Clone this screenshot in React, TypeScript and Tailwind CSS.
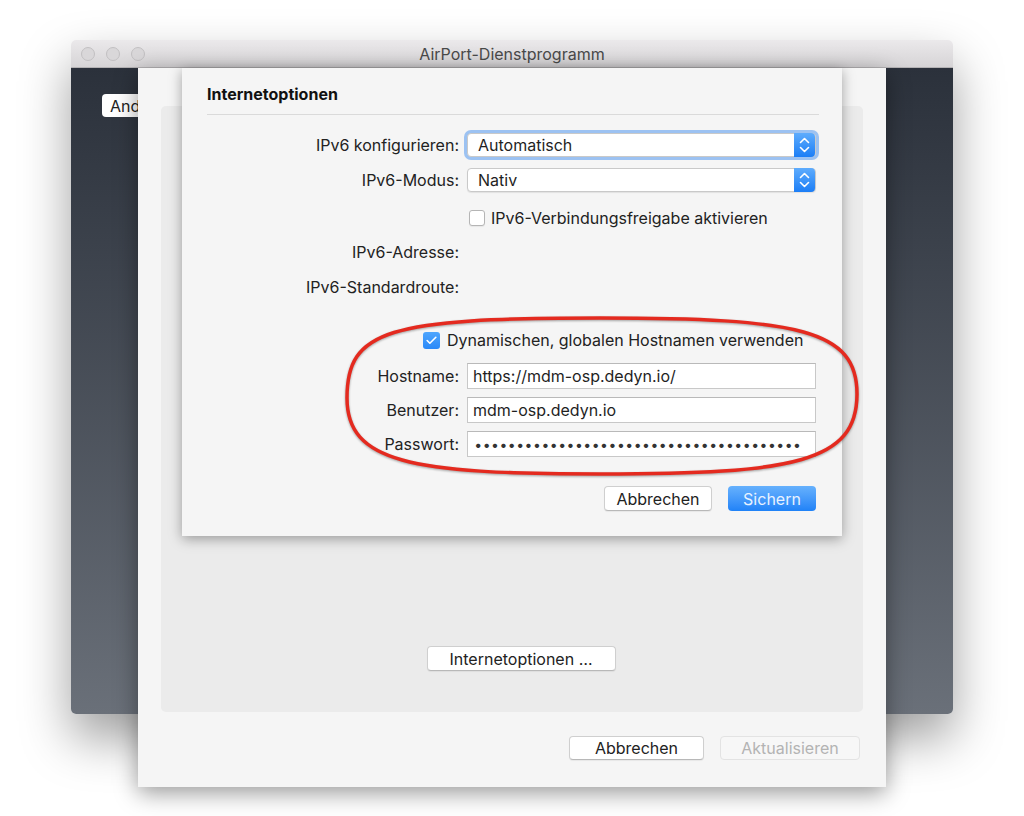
import { Check } from "lucide-react";

function Stepper() {
  return (
    <svg width="21" height="24" viewBox="0 0 21 24" aria-hidden="true" className="shrink-0">
      <defs>
        <linearGradient id="stepBlue" x1="0" y1="0" x2="0" y2="1">
          <stop offset="0" stopColor="#5eacfd" />
          <stop offset="1" stopColor="#1c7ef6" />
        </linearGradient>
      </defs>
      <path d="M0 0H17a4 4 0 0 1 4 4V20a4 4 0 0 1-4 4H0Z" fill="url(#stepBlue)" />
      <path d="M6.5 9.5L10.5 5.5L14.5 9.5" fill="none" stroke="#fff" strokeWidth="1.6" strokeLinecap="round" strokeLinejoin="round" />
      <path d="M6.5 14.5L10.5 18.5L14.5 14.5" fill="none" stroke="#fff" strokeWidth="1.6" strokeLinecap="round" strokeLinejoin="round" />
    </svg>
  );
}

function Popup({ value, focused }: { value: string; focused?: boolean }) {
  return (
    <div
      className={
        "flex h-[24px] w-[349px] items-center rounded-[4px] border border-[#c9c9c9] bg-white " +
        (focused ? "shadow-[0_0_0_3px_rgba(96,160,240,0.6)]" : "shadow-[0_1px_1px_rgba(0,0,0,0.08)]")
      }
    >
      <span className="flex-1 pl-[10px] text-[#1f1f1f]">{value}</span>
      <Stepper />
    </div>
  );
}

function Field({ children }: { children: React.ReactNode }) {
  return (
    <div className="flex h-[26px] w-[349px] items-center border border-[#c8c8c8] border-t-[#b9b9b9] bg-white pl-[5px] text-[#1f1f1f]">
      {children}
    </div>
  );
}

function Row({ label, className, children }: { label?: string; className: string; children?: React.ReactNode }) {
  return (
    <div className={"flex items-center " + className}>
      <div className="w-[252px] text-right text-[#222]">{label}</div>
      <div className="ml-[8px] flex items-center">{children}</div>
    </div>
  );
}

function MacButton({ children, className }: { children: React.ReactNode; className: string }) {
  return (
    <div
      className={
        "flex items-center justify-center rounded-[4px] border border-[#cfcfcf] border-b-[#b8b8b8] bg-white text-[#222] shadow-[0_1px_1px_rgba(0,0,0,0.06)] " +
        className
      }
    >
      {children}
    </div>
  );
}

function OptionsSheet() {
  return (
    <div className="absolute left-[111px] top-[28px] h-[468px] w-[660px] bg-[#f5f5f5] px-[25px] pt-[16px] shadow-[0_3px_12px_rgba(0,0,0,0.35)]">
      <div className="h-[20px] leading-[20px] font-bold text-[#111]">Internetoptionen</div>
      <div className="mt-[10px] h-px w-[612px] bg-[#dadada]" />

      <Row label="IPv6 konfigurieren:" className="mt-[18px] h-[24px]">
        <Popup value="Automatisch" focused />
      </Row>
      <Row label="IPv6-Modus:" className="mt-[11px] h-[24px]">
        <Popup value="Nativ" />
      </Row>
      <Row className="mt-[14px] h-[24px]">
        <div className="ml-[2px] h-[16px] w-[16px] rounded-[3px] border border-[#b5b5b5] bg-white shadow-[0_1px_1px_rgba(0,0,0,0.06)]" />
        <span className="ml-[6px] text-[#222]">IPv6-Verbindungsfreigabe aktivieren</span>
      </Row>
      <Row label="IPv6-Adresse:" className="mt-[10px] h-[24px]" />
      <Row label="IPv6-Standardroute:" className="mt-[11px] h-[24px]" />

      <div className="mt-[29px] flex h-[24px] items-center pl-[216px]">
        <div className="flex h-[17px] w-[17px] items-center justify-center rounded-[3px] bg-gradient-to-b from-[#4ea5fd] to-[#2a89f8]">
          <Check size={13} strokeWidth={3} color="#fff" />
        </div>
        <span className="ml-[7px] text-[#222]">Dynamischen, globalen Hostnamen verwenden</span>
      </div>

      <Row label="Hostname:" className="mt-[11px] h-[26px]">
        <Field>https://mdm-osp.dedyn.io/</Field>
      </Row>
      <Row label="Benutzer:" className="mt-[8px] h-[26px]">
        <Field>mdm-osp.dedyn.io</Field>
      </Row>
      <Row label="Passwort:" className="mt-[8px] h-[26px]">
        <Field>
          <div className="flex pl-[1px] text-[14px] text-[#333]">
            {Array.from({ length: 39 }).map((_, i) => (
              <span key={i} className="w-[8.4px] text-center">
                •
              </span>
            ))}
          </div>
        </Field>
      </Row>

      <div className="mt-[29px] flex h-[25px] w-[609px] justify-end gap-[16px]">
        <MacButton className="w-[108px]">Abbrechen</MacButton>
        <div className="flex w-[88px] items-center justify-center rounded-[4px] bg-gradient-to-b from-[#66b1fd] to-[#1f82f7] text-[#e8f2ff]">
          Sichern
        </div>
      </div>
    </div>
  );
}

function MainSheet() {
  return (
    <div className="absolute left-[67px] top-[28px] flex h-[719px] w-[748px] flex-col bg-[#f5f5f5] shadow-[0_6px_22px_rgba(0,0,0,0.4)]">
      <div className="mx-[23px] mt-[38px] flex h-[606px] flex-col items-center justify-end rounded-[5px] bg-[#ebebeb] pb-[41px]">
        <MacButton className="ml-[18px] h-[25px] w-[189px]">Internetoptionen …</MacButton>
      </div>
      <div className="mt-[24px] flex justify-end gap-[16px] pr-[26px]">
        <MacButton className="h-[24px] w-[135px]">Abbrechen</MacButton>
        <div className="flex h-[24px] w-[140px] items-center justify-center rounded-[4px] border border-[#e3e3e3] bg-[#f7f7f7] text-[#b3b3b3]">
          Aktualisieren
        </div>
      </div>
    </div>
  );
}

export default function App() {
  return (
    <div className="relative h-[816px] w-[1024px] overflow-hidden bg-white font-[Inter,'Liberation_Sans',sans-serif] text-[16px]">
      <div className="relative ml-[71px] mt-[40px] h-[674px] w-[882px] rounded-[5px] shadow-[0_24px_50px_rgba(0,0,0,0.38)]">
        <div className="relative flex h-[28px] items-center rounded-t-[5px] border-b border-[#b4b2b4] bg-gradient-to-b from-[#ebe9eb] to-[#d6d4d6]">
          <div className="ml-[10px] flex gap-[11px]">
            <span className="h-[14px] w-[14px] rounded-full border border-[#c2c0c2] bg-[#d9d7d9]" />
            <span className="h-[14px] w-[14px] rounded-full border border-[#c2c0c2] bg-[#d9d7d9]" />
            <span className="h-[14px] w-[14px] rounded-full border border-[#c2c0c2] bg-[#d9d7d9]" />
          </div>
          <div className="absolute inset-x-0 text-center text-[#4a4a4a]">AirPort-Dienstprogramm</div>
        </div>
        <div className="h-[646px] rounded-b-[5px] bg-gradient-to-b from-[#2b313b] to-[#6a7079] pl-[31px] pt-[26px]">
          <div className="flex h-[23px] w-[70px] items-center rounded-[4px] bg-white pl-[8px] text-[#222]">Andern</div>
        </div>
        <MainSheet />
        <OptionsSheet />
      </div>

      <svg className="pointer-events-none absolute left-0 top-0 drop-shadow-[0_1px_1px_rgba(0,0,0,0.35)]" width="1024" height="816" viewBox="0 0 1024 816" aria-hidden="true">
        <path
          d="M347 398C347 330 388 318 600 318C800 318 857 330 857 394C857 462 795 474 600 474C410 474 347 462 347 398Z"
          fill="none"
          stroke="#e42a1f"
          strokeWidth="3.5"
        />
      </svg>
    </div>
  );
}
